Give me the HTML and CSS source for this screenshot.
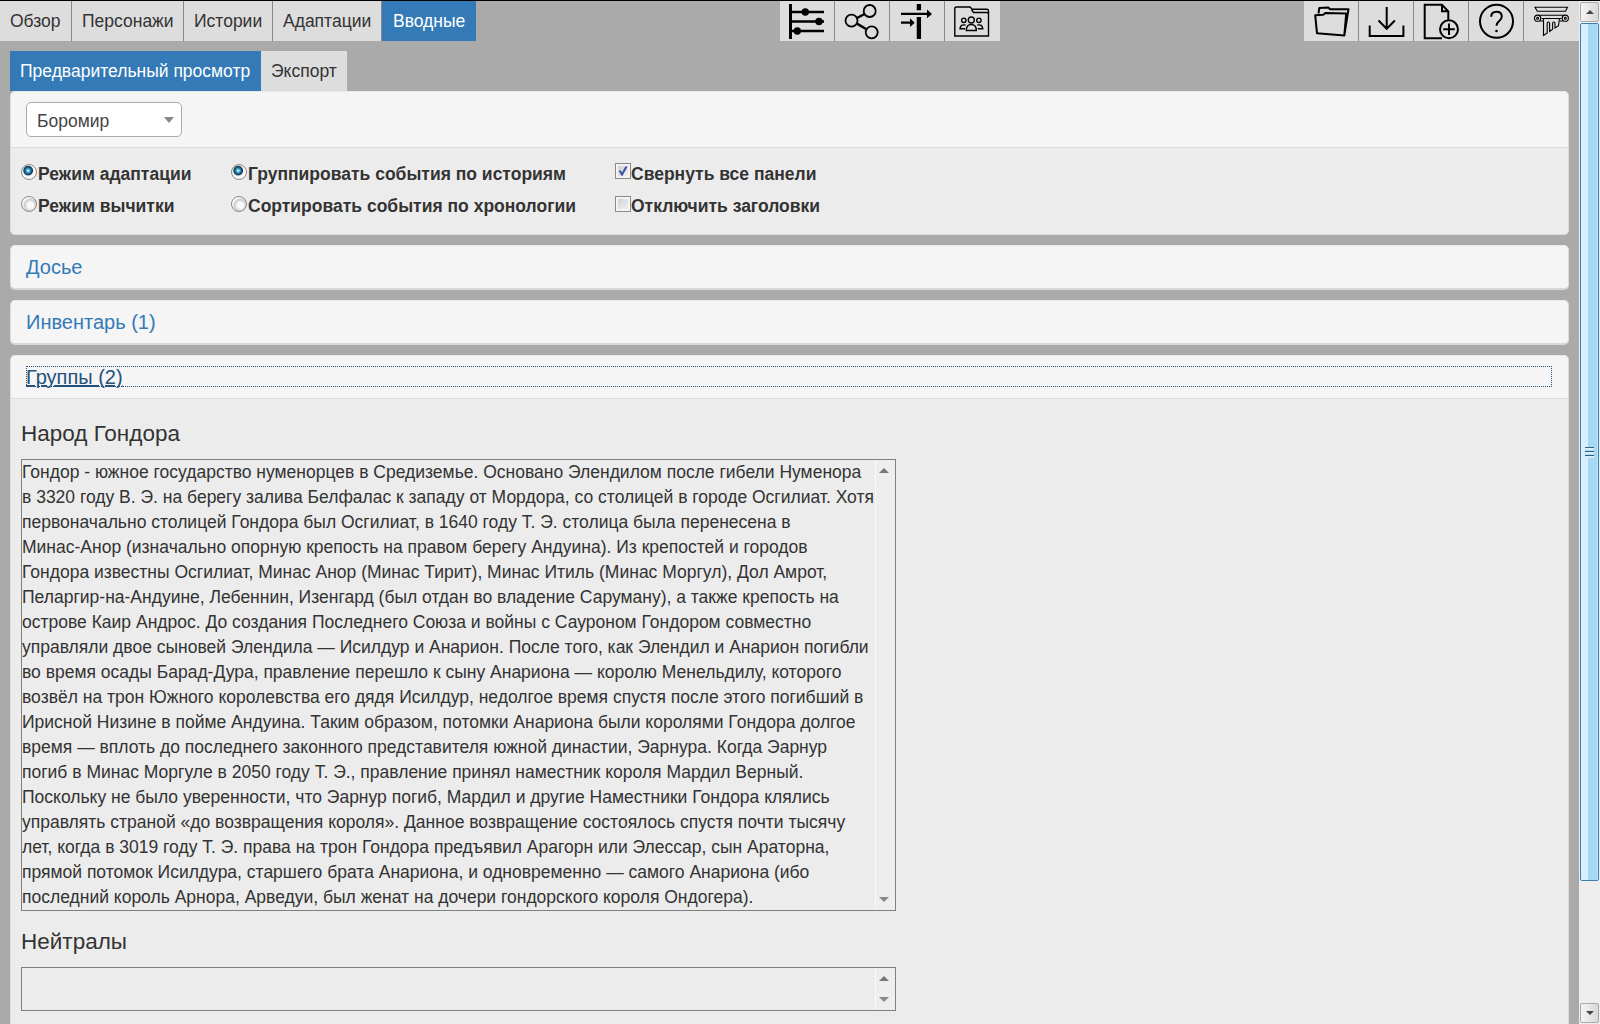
FILE: index.html
```html
<!DOCTYPE html>
<html lang="ru">
<head>
<meta charset="utf-8">
<title>Вводные</title>
<link rel="stylesheet" href="styles.css">
</head>
<body>
<div class="app">
  <div class="page">
    <header class="topbar">
      <nav class="tabs">
        <a class="tab t-overview">Обзор</a><a class="tab t-chars">Персонажи</a><a class="tab t-stories">Истории</a><a class="tab t-adapt">Адаптации</a><a class="tab t-brief active">Вводные</a>
      </nav>
      <div class="tools">
        <button class="tool"><svg viewBox="0 0 55 40"><path d="M10.500 3v35" stroke-width="3"/><path d="M11 11h33M11 20.500h33M11 30h33" stroke-width="2.600"/><g class="solid"><circle cx="25.300" cy="11" r="3.700"/><circle cx="39" cy="20.500" r="3.700"/><circle cx="17.300" cy="30" r="3.700"/></g></svg></button>
        <button class="tool"><svg viewBox="0 0 55 40"><path d="M22 17l7.500-4M22 22.700l9 5.300" stroke-width="2.500"/><g stroke-width="1.800"><circle cx="16.500" cy="19.700" r="6"/><circle cx="34.700" cy="10" r="6"/><circle cx="36.700" cy="31.300" r="6"/></g></svg></button>
        <button class="tool"><svg viewBox="0 0 55 40"><path d="M28.900 3v6.300M28.900 16v22" stroke-width="4.300"/><path d="M11 12.900h27M11 21.700h10" stroke-width="2.200"/><g class="solid"><path d="M37 8.500l5 4.400-5 4.400zM20 17.300l4.700 4.400-4.700 4.400z"/></g></svg></button>
        <button class="tool"><svg viewBox="0 0 55 40"><g stroke-width="1.400"><path d="M9.800 35V7.500Q9.800 6 11.300 6H25l2.300 2.300h14.500q1.700 0 1.700 1.700v25zM26.500 8.500l2 3H42q1.500 0 1.500 1.500"/><circle cx="26.300" cy="19" r="3"/><circle cx="18.800" cy="19.300" r="2.200"/><circle cx="33.900" cy="19.300" r="2.200"/><path d="M21.300 29.500q0-6 5-6t5 6zM20.500 24q-5-1-5.500 3.800h5M32.300 24q5-1 5.500 3.800h-5"/></g></svg></button>
      </div>
      <div class="tools">
        <button class="tool"><svg viewBox="0 0 55 40"><path d="M14.500 12.500l.8-5.500 9-.6 1.700 1.800h18.500L40.300 34.500M11.200 14.300l8-.5 2.200-1.800 20.800.5-1.900 22-27.300-2.300z" stroke-width="2" stroke-linejoin="round"/></svg></button>
        <button class="tool"><svg viewBox="0 0 55 40"><path d="M27.700 6v22M19.500 19.500l8.200 8.300 8.200-8.300M10.700 24.500V35h33.700V24.500" stroke-width="2"/></svg></button>
        <button class="tool"><svg viewBox="0 0 55 40"><path d="M28 37.300H10.700V3.700H28l6.300 6.600v8.500M28 3.700v6.600h6.300" stroke-width="2"/><circle cx="35" cy="28.300" r="9" stroke-width="2"/><path d="M35 22.500v11.600M29.200 28.300h11.600" stroke-width="2"/></svg></button>
        <button class="tool"><svg viewBox="0 0 55 40"><circle cx="27.500" cy="20.300" r="16.500" stroke-width="2"/><path d="M22.200 15.700q0-5 5.300-5t5.300 4.700q0 2.500-2.600 4.600-2.700 2.200-2.700 4.700" stroke-width="2"/><circle class="solid" cx="27.500" cy="30" r="1.300"/></svg></button>
        <button class="tool"><svg viewBox="0 0 55 40"><g stroke-width="1.100"><path d="M11 6.300h32.500l-2 4H13.300zM14.500 14.300h26M17.500 17.500h20M16 20h3.500M36 20h3"/><circle cx="13.600" cy="17.200" r="3.100"/><circle cx="41.300" cy="17.200" r="3.100"/><circle cx="13.600" cy="17.200" r="1"/><circle cx="41.300" cy="17.200" r="1"/><path d="M19.500 17.500v17l3.700-2.600V22.500q0-1.500 1.200-1.500t1.200 1.500v8l3-2.300v-5.700q0-1.500 1.200-1.500t1.200 1.500v4.500l3.500-2.300 1-7"/></g></svg></button>
      </div>
    </header>

    <main class="content">
      <nav class="tabs subtabs"><a class="tab t-preview active">Предварительный просмотр</a><a class="tab t-export">Экспорт</a></nav>

      <section class="panel settings">
        <div class="panel-heading"><div class="select"><span>Боромир</span><i class="tri down"></i></div></div>
        <div class="options">
          <div class="col"><label><i class="radio on"></i>Режим адаптации</label><label><i class="radio"></i>Режим вычитки</label></div>
          <div class="col"><label><i class="radio on"></i>Группировать события по историям</label><label><i class="radio"></i>Сортировать события по хронологии</label></div>
          <div class="col"><label><i class="check"><svg viewBox="0 0 14 14"><path d="M3.500 6.500l2.500 4 4.500-8"/></svg></i>Свернуть все панели</label><label><i class="check"></i>Отключить заголовки</label></div>
        </div>
      </section>

      <section class="panel collapsed"><a class="title">Досье</a></section>
      <section class="panel collapsed"><a class="title">Инвентарь (1)</a></section>

      <section class="panel groups">
        <div class="panel-heading"><a class="title focused">Группы (2)</a></div>
        <div class="panel-body">
          <h4>Народ Гондора</h4>
          <div class="textarea big">
            <div class="text">Гондор - южное государство нуменорцев в Средиземье. Основано Элендилом после гибели Нуменора<br>в 3320 году В. Э. на берегу залива Белфалас к западу от Мордора, со столицей в городе Осгилиат. Хотя<br>первоначально столицей Гондора был Осгилиат, в 1640 году Т. Э. столица была перенесена в<br>Минас-Анор (изначально опорную крепость на правом берегу Андуина). Из крепостей и городов<br>Гондора известны Осгилиат, Минас Анор (Минас Тирит), Минас Итиль (Минас Моргул), Дол Амрот,<br>Пеларгир-на-Андуине, Лебеннин, Изенгард (был отдан во владение Саруману), а также крепость на<br>острове Каир Андрос. До создания Последнего Союза и войны с Сауроном Гондором совместно<br>управляли двое сыновей Элендила — Исилдур и Анарион. После того, как Элендил и Анарион погибли<br>во время осады Барад-Дура, правление перешло к сыну Анариона — королю Менельдилу, которого<br>возвёл на трон Южного королевства его дядя Исилдур, недолгое время спустя после этого погибший в<br>Ирисной Низине в пойме Андуина. Таким образом, потомки Анариона были королями Гондора долгое<br>время — вплоть до последнего законного представителя южной династии, Эарнура. Когда Эарнур<br>погиб в Минас Моргуле в 2050 году Т. Э., правление принял наместник короля Мардил Верный.<br>Поскольку не было уверенности, что Эарнур погиб, Мардил и другие Наместники Гондора клялись<br>управлять страной «до возвращения короля». Данное возвращение состоялось спустя почти тысячу<br>лет, когда в 3019 году Т. Э. права на трон Гондора предъявил Арагорн или Элессар, сын Араторна,<br>прямой потомок Исилдура, старшего брата Анариона, и одновременно — самого Анариона (ибо<br>последний король Арнора, Арведуи, был женат на дочери гондорского короля Ондогера).</div>
            <div class="mini-scroll"><i class="tri up"></i><i class="tri down"></i></div>
          </div>
          <h4>Нейтралы</h4>
          <div class="textarea small">
            <div class="text"></div>
            <div class="mini-scroll"><i class="tri up"></i><i class="tri down"></i></div>
          </div>
        </div>
      </section>
    </main>
  </div>
  <div class="scrollbar">
    <div class="sb-btn"><i class="tri up"></i></div>
    <div class="thumb"><i class="grip"></i></div>
    <div class="sb-space"></div>
    <div class="sb-btn"><i class="tri down"></i></div>
  </div>
</div>
</body>
</html>
```
FILE: styles.css
```css
* { box-sizing: border-box; }
body {
  margin: 0;
  height: 1024px;
  overflow: hidden;
  background: #aaa;
  color: #333;
  font: 17.5px/25px "Liberation Sans", Arial, sans-serif;
}
.app { display: flex; height: 1024px; border-top: 1px solid #000; }
.page { flex: 1; min-width: 0; }

.topbar { display: flex; justify-content: space-between; height: 40px; }
.tabs { display: flex; height: 40px; }
.tab {
  padding: 8px 0 0 10px;
  height: 40px;
  background: #ddd;
  border-right: 1px solid #888;
  white-space: nowrap;
}
.tab.active { background: #337ab7; color: #fff; border-right-color: #337ab7; }
.t-overview { width: 72px; }
.t-chars { width: 112px; }
.t-stories { width: 89px; }
.t-adapt { width: 109px; }
.t-brief { width: 94px; padding-left: 11px; }
.t-preview { width: 251px; }
.t-export { width: 86px; border-right: 0; }

.tools { display: flex; }
.tool {
  width: 55px;
  height: 40px;
  padding: 0;
  border: 0;
  border-right: 1px solid #888;
  background: #ddd;
}
.tool:last-child { border-right-color: #ddd; }
.tool svg { display: block; width: 55px; height: 40px; fill: none; stroke: #000; }
.tool .solid { fill: #000; stroke: none; }

.content { padding: 10px 10px 0 10px; }
.panel {
  background: #ececec;
  border-radius: 5px;
  border: 1px solid #ddd;
  border-color: #e8e8e8 #ddd #ddd;
  margin-bottom: 10px;
}
.panel-heading { background: #f5f5f5; border-bottom: 1px solid #ddd; border-radius: 4px 4px 0 0; }
.settings { height: 144px; }
.settings .panel-heading { height: 56px; padding: 10px 15px; }
.select {
  display: flex;
  align-items: center;
  justify-content: space-between;
  width: 156px;
  height: 35px;
  padding: 3px 7px 0 10px;
  border: 1px solid #aaa;
  border-radius: 5px;
  background: #fff;
  color: #444;
}
.tri { width: 0; height: 0; border: 5px solid transparent; }
.tri.up { border-top: 0; border-bottom-color: #777; }
.tri.down { border-bottom: 0; border-top-color: #888; }
.select .tri { margin-top: -3px; border-top-width: 6px; }

.options { display: flex; padding: 14px 10px 0; }
.col:nth-child(1) { width: 210px; }
.col:nth-child(2) { width: 384px; }
.col label { display: flex; height: 32px; line-height: 25px; font-weight: bold; white-space: nowrap; }
.col label + label .radio, .col label + label .check { margin-top: 2px; }
.radio, .check { flex: none; width: 16px; height: 16px; margin-top: 1px; }
.radio {
  margin-right: 1px;
  border: 1px solid #8a8a8a;
  border-radius: 50%;
  background: radial-gradient(circle at 60% 60%, #f8f8f8 0 25%, #ccc 50%, #fafafa 65%);
}
.radio.on { margin-top: 2px; background: radial-gradient(circle at 44% 40%, #9fe4f5 0 8%, #2687b5 20%, #123652 38%, #eee 46%, #fafafa 60%); }
.check { border: 1px solid #8a8a8a; background: linear-gradient(135deg, #c9cdd3, #f5f5f5); box-shadow: inset 0 0 0 2px #f4f4f4; }
.check svg { display: block; width: 14px; height: 14px; fill: none; stroke: #3c549c; stroke-width: 2; }

.title { display: block; font-size: 20px; line-height: 22px; color: #337ab7; }
.collapsed { height: 45px; padding: 10px 15px; background: #f5f5f5; border-bottom: 2px solid #d8d8d8; }
.groups { height: 700px; }
.groups .panel-heading { height: 43px; padding: 10px 16px 10px 15px; }
.title.focused { height: 21px; color: #23527c; text-decoration: underline; outline: 1px dotted #23527c; outline-offset: -1px; }
.panel-body { padding: 22px 10px; }
h4 { margin: 0 0 13px; font-size: 22.5px; line-height: 25px; font-weight: normal; }
.textarea { display: flex; width: 875px; border: 1px solid #808080; }
.big { height: 452px; margin-bottom: 18px; }
.small { height: 44px; }
.text { flex: 1; min-width: 0; white-space: nowrap; }
.mini-scroll {
  display: flex;
  flex-direction: column;
  justify-content: space-between;
  align-items: center;
  width: 20px;
  padding: 8px 3px 8px 0;
  background: #eee;
  border-left: 1px solid #f8f8f8;
}

.scrollbar { display: flex; flex-direction: column; width: 21px; padding: 1px 1px 1px; background: #eee; }
.sb-btn {
  display: flex;
  align-items: center;
  justify-content: center;
  height: 20px;
  border: 1px solid #aaa;
  border-radius: 2px;
  background: linear-gradient(90deg, #f5f5f5, #d8d8d8);
}
.sb-btn .tri { border-width: 4px; border-top-width: 4px; }
.sb-btn .tri.up { border-top-width: 0; border-bottom-color: #444; }
.sb-btn .tri.down { border-bottom-width: 0; border-top-color: #444; }
.thumb {
  display: flex;
  align-items: center;
  justify-content: center;
  height: 858px;
  margin-top: 1px;
  border: 1px solid #3c7fb1;
  border-radius: 2px;
  background: linear-gradient(90deg, #d9f0fc 0 40%, #a6d8f3 42% 90%, #c8e8fa);
}
.grip { width: 9px; height: 11px; background: repeating-linear-gradient(#2f6285 0 1px, #d6eefa 1px 3px, #a6d8f3 3px 4px); }
.sb-space { flex: 1; }
```
